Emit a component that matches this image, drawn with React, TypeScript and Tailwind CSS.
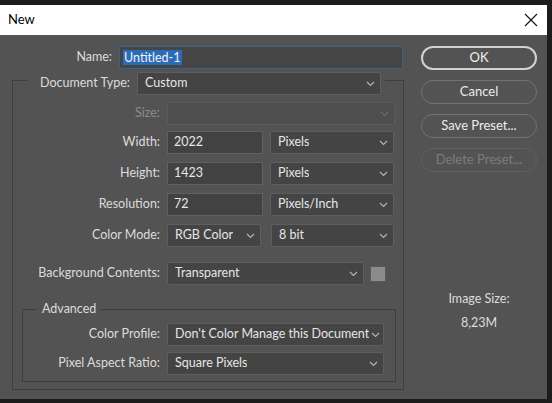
import React from "react";

const F = { fontFamily: 'Lato, "Noto Sans", Arial, sans-serif' };

function Chevron({ faint = false }: { faint?: boolean }) {
  return (
    <svg width="9" height="6" viewBox="0 0 9 6" className="shrink-0">
      <path d="M1 1 L4.5 4.5 L8 1" fill="none" stroke={faint ? "#6a6a6a" : "#b5b5b5"} strokeWidth="1.1" />
    </svg>
  );
}

function Select({ value, w, disabled = false, pr = "pr-[5px]" }: { value: string; w: string; disabled?: boolean; pr?: string }) {
  return (
    <div
      className={`${w} h-[23px] flex items-center justify-between pl-[7px] ${pr} rounded-[2px] border ${
        disabled ? "bg-[#4e4e4e] border-[#5c5c5c]" : "bg-[#444444] border-[#5e5e5e]"
      } text-[#e6e6e6] whitespace-nowrap overflow-hidden`}
    >
      <span className="overflow-hidden">{value}</span>
      <Chevron faint={disabled} />
    </div>
  );
}

function Input({ value, w }: { value: string; w: string }) {
  return (
    <div className={`${w} h-[23px] flex items-center pl-[6px] bg-[#424242] border border-[#606060] text-[#e6e6e6]`}>
      {value}
    </div>
  );
}

function Label({ children, w = "w-[154px]", dim = false }: { children: React.ReactNode; w?: string; dim?: boolean }) {
  return (
    <div className={`${w} shrink-0 text-right pr-[7px] ${dim ? "text-[#8c8c8c]" : "text-[#dcdcdc]"} whitespace-nowrap`}>
      {children}
    </div>
  );
}

function Btn({ children, kind }: { children: React.ReactNode; kind: "ok" | "norm" | "dis" }) {
  const cls =
    kind === "ok"
      ? "border-2 border-[#d2d2d2] text-[#f0f0f0]"
      : kind === "norm"
      ? "border border-[#727272] text-[#ececec]"
      : "border border-[#606060] text-[#7c7c7c]";
  return (
    <div className={`w-[116px] h-[24px] rounded-full flex items-center justify-center text-[13px] ${cls}`}>
      {children}
    </div>
  );
}

export default function App() {
  return (
    <div className="w-[552px] h-[403px] bg-[#1c1c1c] pt-[5px] overflow-hidden text-[12.5px]" style={F}>
      <div className="w-[547px] h-[394px] flex flex-col">
        <div className="h-[30px] bg-white flex items-center justify-between pl-[8px] pr-[8px] shrink-0">
          <span className="text-[13px] text-black">New</span>
          <svg width="14" height="14" viewBox="0 0 14 14" className="mr-[1px]">
            <path d="M1 1 L13 13 M13 1 L1 13" stroke="#111" strokeWidth="1.1" />
          </svg>
        </div>
        <div className="flex-1 bg-[#535353] flex">
          {/* left */}
          <div className="w-[410px] pl-[12px] shrink-0">
            <div className="flex items-center mt-[11px] h-[23px]">
              <div className="w-[107px] text-right pr-[7px] text-[#dcdcdc]">Name:</div>
              <div className="w-[284px] h-[23px] flex items-center pl-[3px] bg-[#454545] border border-[#3d6287] rounded-[1px]">
                <span className="bg-[#2a6cb8] text-[#f2f2f2] px-[1px] leading-[15px]">Untitled-1</span>
              </div>
            </div>
            {/* outer frame */}
            <div className="mt-[11px] w-[392px] h-[310px] border border-[#3e3e3e]">
              <div className="-mt-[9px] ml-[14px] w-fit bg-[#535353] pl-[13px] pr-[4px] flex items-center h-[23px]">
                <span className="w-[97px] text-[#dcdcdc] whitespace-nowrap">Document Type:</span>
                <Select value="Custom" w="w-[244px]" />
              </div>
              <div className="flex items-center mt-[7px]">
                <Label dim>Size:</Label>
                <Select value="" w="w-[228px]" disabled />
              </div>
              <div className="flex items-center mt-[6px]">
                <Label>Width:</Label>
                <Input value="2022" w="w-[96px]" />
                <div className="ml-[7px]"><Select value="Pixels" w="w-[124px]" /></div>
              </div>
              <div className="flex items-center mt-[8px]">
                <Label>Height:</Label>
                <Input value="1423" w="w-[96px]" />
                <div className="ml-[7px]"><Select value="Pixels" w="w-[124px]" /></div>
              </div>
              <div className="flex items-center mt-[8px]">
                <Label>Resolution:</Label>
                <Input value="72" w="w-[96px]" />
                <div className="ml-[7px]"><Select value="Pixels/Inch" w="w-[124px]" /></div>
              </div>
              <div className="flex items-center mt-[8px]">
                <Label>Color Mode:</Label>
                <Select value="RGB Color" w="w-[94px]" />
                <div className="ml-[10px]"><Select value="8 bit" w="w-[123px]" /></div>
              </div>
              <div className="flex items-center mt-[15px]">
                <Label>Background Contents:</Label>
                <Select value="Transparent" w="w-[197px]" />
                <div className="ml-[6px] w-[16px] h-[16px] bg-[#8b8b8b] border border-[#5a5a5a]" />
              </div>
              {/* advanced frame */}
              <div className="mt-[24px] ml-[9px] w-[374px] h-[73px] border border-[#3e3e3e]">
                <div className="-mt-[10px] ml-[14px] w-fit bg-[#535353] px-[5px] h-[19px] flex items-center text-[#dcdcdc]">
                  Advanced
                </div>
                <div className="flex items-center mt-[4px]">
                  <Label w="w-[144px]">Color Profile:</Label>
                  <Select value="Don't Color Manage this Document" w="w-[217px]" pr="pr-[3px]" />
                </div>
                <div className="flex items-center mt-[6px]">
                  <Label w="w-[144px]">Pixel Aspect Ratio:</Label>
                  <Select value="Square Pixels" w="w-[217px]" />
                </div>
              </div>
            </div>
          </div>
          {/* right */}
          <div className="flex flex-col items-start pl-[11px] pt-[11px]">
            <div className="flex flex-col gap-[10px]">
              <Btn kind="ok">OK</Btn>
              <Btn kind="norm">Cancel</Btn>
              <Btn kind="norm">Save Preset...</Btn>
              <Btn kind="dis">Delete Preset...</Btn>
            </div>
            <div className="w-[116px] mt-[115px] text-center text-[#dcdcdc] leading-[24px]">
              <div>Image Size:</div>
              <div>8,23M</div>
            </div>
          </div>
        </div>
      </div>
    </div>
  );
}
